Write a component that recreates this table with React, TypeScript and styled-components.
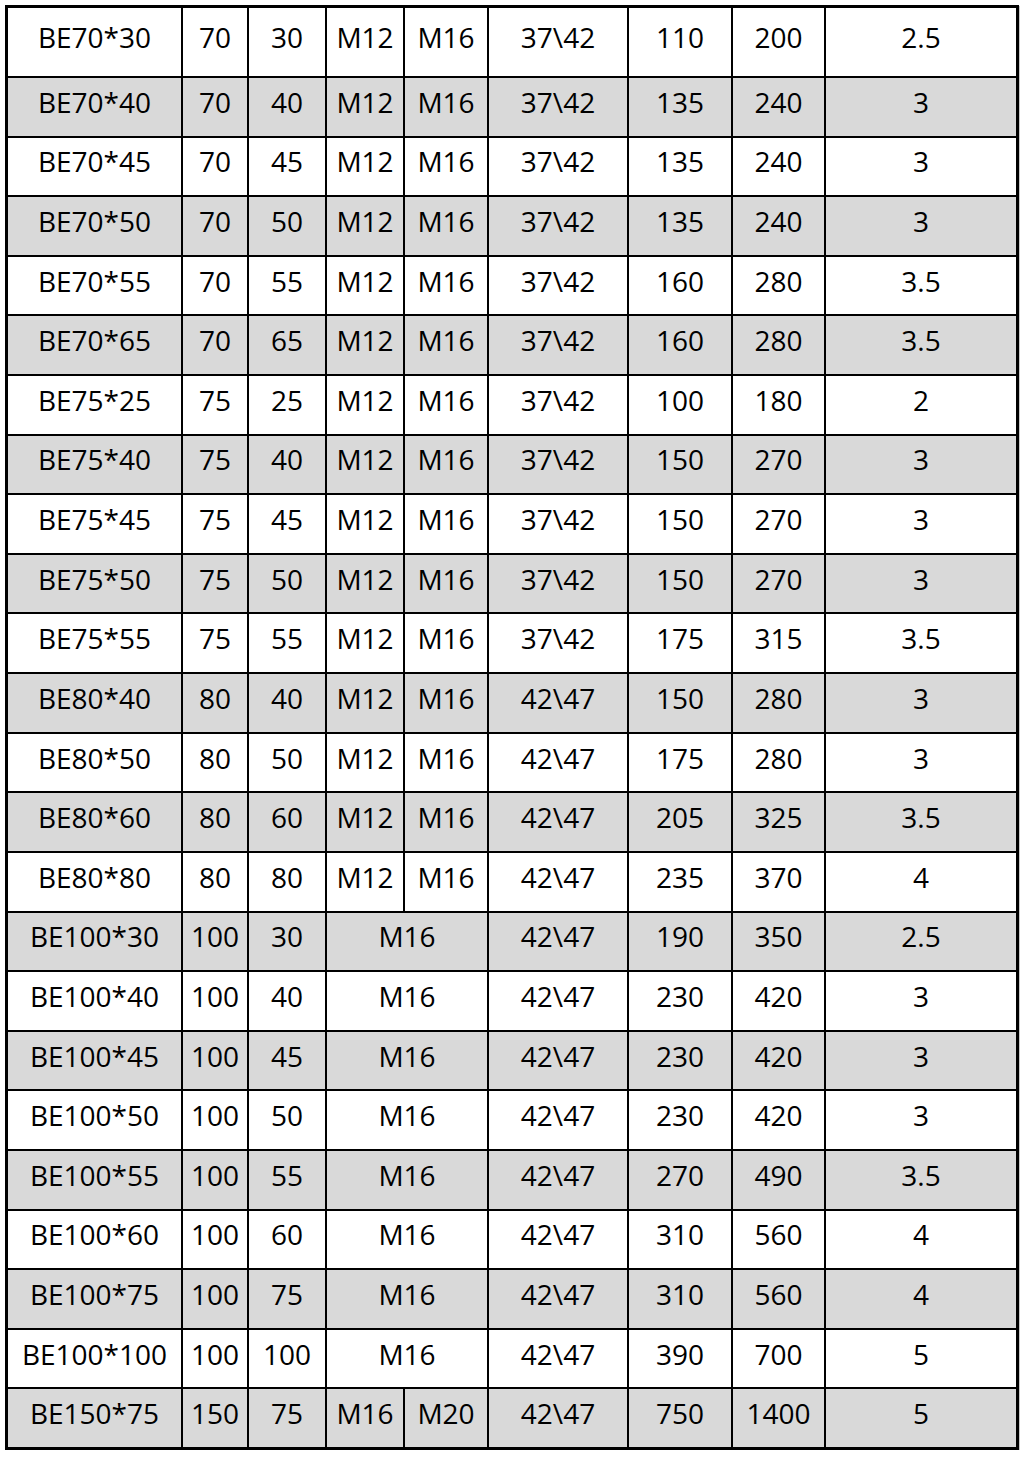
import styled, { createGlobalStyle } from 'styled-components'

const GlobalStyles = createGlobalStyle`
  html, body {
    margin: 0;
    padding: 0;
    background: #ffffff;
  }
  body {
    font-family: "Open Sans", "Noto Sans", sans-serif;
  }
`

type Row = {
  model: string
  a: string
  b: string
  bolts: [string, string] | string
  hole: string
  c: string
  d: string
  weight: string
}

const r = (
  model: string,
  a: string,
  b: string,
  bolts: [string, string] | string,
  hole: string,
  c: string,
  d: string,
  weight: string
): Row => ({ model, a, b, bolts, hole, c, d, weight })

const M12: [string, string] = ['M12', 'M16']

const rows: Row[] = [
  r('BE70*30', '70', '30', M12, '37\\42', '110', '200', '2.5'),
  r('BE70*40', '70', '40', M12, '37\\42', '135', '240', '3'),
  r('BE70*45', '70', '45', M12, '37\\42', '135', '240', '3'),
  r('BE70*50', '70', '50', M12, '37\\42', '135', '240', '3'),
  r('BE70*55', '70', '55', M12, '37\\42', '160', '280', '3.5'),
  r('BE70*65', '70', '65', M12, '37\\42', '160', '280', '3.5'),
  r('BE75*25', '75', '25', M12, '37\\42', '100', '180', '2'),
  r('BE75*40', '75', '40', M12, '37\\42', '150', '270', '3'),
  r('BE75*45', '75', '45', M12, '37\\42', '150', '270', '3'),
  r('BE75*50', '75', '50', M12, '37\\42', '150', '270', '3'),
  r('BE75*55', '75', '55', M12, '37\\42', '175', '315', '3.5'),
  r('BE80*40', '80', '40', M12, '42\\47', '150', '280', '3'),
  r('BE80*50', '80', '50', M12, '42\\47', '175', '280', '3'),
  r('BE80*60', '80', '60', M12, '42\\47', '205', '325', '3.5'),
  r('BE80*80', '80', '80', M12, '42\\47', '235', '370', '4'),
  r('BE100*30', '100', '30', 'M16', '42\\47', '190', '350', '2.5'),
  r('BE100*40', '100', '40', 'M16', '42\\47', '230', '420', '3'),
  r('BE100*45', '100', '45', 'M16', '42\\47', '230', '420', '3'),
  r('BE100*50', '100', '50', 'M16', '42\\47', '230', '420', '3'),
  r('BE100*55', '100', '55', 'M16', '42\\47', '270', '490', '3.5'),
  r('BE100*60', '100', '60', 'M16', '42\\47', '310', '560', '4'),
  r('BE100*75', '100', '75', 'M16', '42\\47', '310', '560', '4'),
  r('BE100*100', '100', '100', 'M16', '42\\47', '390', '700', '5'),
  r('BE150*75', '150', '75', ['M16', 'M20'], '42\\47', '750', '1400', '5'),
]

const Sheet = styled.div`
  display: grid;
  grid-template-columns: 173px 64px 76px 76px 82px 138px 102px 91px 190px;
  grid-template-rows: 68px;
  grid-auto-rows: 57.62px;
  gap: 2px;
  padding: 3px;
  margin: 5px 0 0 5px;
  width: max-content;
  background: #000000;
  box-shadow: 1px 1px 0 #c8c8c8;
`

const Cell = styled.div<{ $shade: boolean; $span?: number }>`
  grid-column: span ${({ $span }) => $span ?? 1};
  display: flex;
  align-items: center;
  justify-content: center;
  padding-bottom: 10px;
  box-sizing: border-box;
  background: ${({ $shade }) => ($shade ? '#d9d9d9' : '#ffffff')};
  color: #000000;
  font-size: 28px;
  line-height: 1;
  white-space: nowrap;
`

function TableRow({ row, shade }: { row: Row; shade: boolean }) {
  return (
    <>
      <Cell $shade={shade}>{row.model}</Cell>
      <Cell $shade={shade}>{row.a}</Cell>
      <Cell $shade={shade}>{row.b}</Cell>
      {Array.isArray(row.bolts) ? (
        <>
          <Cell $shade={shade}>{row.bolts[0]}</Cell>
          <Cell $shade={shade}>{row.bolts[1]}</Cell>
        </>
      ) : (
        <Cell $shade={shade} $span={2}>{row.bolts}</Cell>
      )}
      <Cell $shade={shade}>{row.hole}</Cell>
      <Cell $shade={shade}>{row.c}</Cell>
      <Cell $shade={shade}>{row.d}</Cell>
      <Cell $shade={shade}>{row.weight}</Cell>
    </>
  )
}

function App() {
  return (
    <>
      <GlobalStyles />
      <Sheet>
        {rows.map((row, i) => (
          <TableRow key={row.model} row={row} shade={i % 2 === 1} />
        ))}
      </Sheet>
    </>
  )
}

export default App
